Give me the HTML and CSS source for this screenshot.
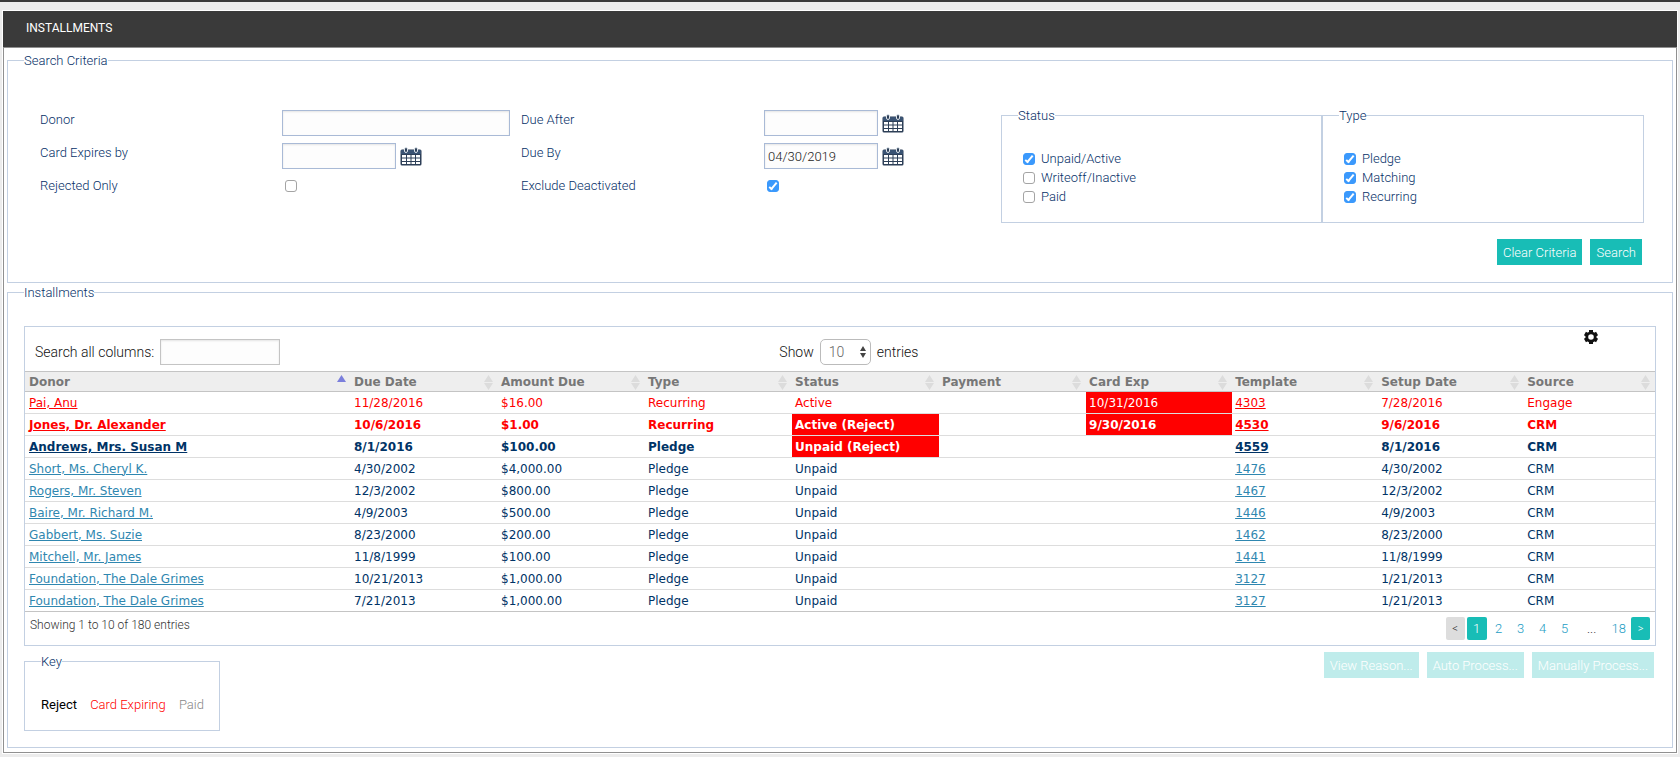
FILE: index.html
```html
<!DOCTYPE html>
<html lang="en">
<head>
<meta charset="utf-8">
<title>Installments</title>
<link rel="stylesheet" href="styles.css">
</head>
<body>
<svg class="defs" aria-hidden="true">
  <symbol id="calendar" viewBox="0 0 22 19">
    <rect x="0.5" y="2.5" width="21" height="16" rx="1.5" fill="#2d3f57"/>
    <rect x="1" y="3" width="20" height="4" fill="#3a5373"/>
    <g fill="#fff">
      <path d="M2 8h4v2.400H2zM7 8h3.500v2.400H7zM11.500 8H15v2.400h-3.500zM16 8h4v2.400h-4z"/>
      <path d="M2 11.500h4v2.400H2zM7 11.500h3.500v2.400H7zM11.500 11.500H15v2.400h-3.500zM16 11.500h4v2.400h-4z"/>
      <path d="M2 15h4v2H2zM7 15h3.500v2H7zM11.500 15H15v2h-3.500zM16 15h4v2h-4z"/>
    </g>
    <g fill="#2d3f57" stroke="#dfe5ec" stroke-width="1">
      <rect x="4.500" y="0.500" width="3" height="5" rx="1.500"/>
      <rect x="14.500" y="0.500" width="3" height="5" rx="1.500"/>
    </g>
  </symbol>
  <symbol id="sort" viewBox="0 0 9 15">
    <path d="M4.500 0L9 7H0zM0 8h9l-4.500 7z" fill="#dcdcdc"/>
  </symbol>
  <symbol id="sort-up" viewBox="0 0 9 15">
    <path d="M4.500 0L9 7H0z" fill="#7b7fdc"/>
  </symbol>
</svg>
<main class="panel">
  <h1 class="panel-title">INSTALLMENTS</h1>
  <div class="panel-body">
    <fieldset class="section criteria">
      <legend>Search Criteria</legend>
      <form>
        <div class="criteria-grid">
          <div class="fields">
            <label for="donor">Donor</label>
            <div><input class="text wide" id="donor" type="text"></div>
            <label for="after">Due After</label>
            <div><input class="text date" id="after" type="text"><button class="icon" type="button" aria-label="Pick due after date"><svg class="cal"><use href="#calendar"/></svg></button></div>
            <label for="expires">Card Expires by</label>
            <div><input class="text date" id="expires" type="text"><button class="icon" type="button" aria-label="Pick card expiry date"><svg class="cal"><use href="#calendar"/></svg></button></div>
            <label for="by">Due By</label>
            <div><input class="text date" id="by" type="text" value="04/30/2019"><button class="icon" type="button" aria-label="Pick due by date"><svg class="cal"><use href="#calendar"/></svg></button></div>
            <label for="rejected">Rejected Only</label>
            <div class="tick"><input id="rejected" type="checkbox"></div>
            <label for="deactivated">Exclude Deactivated</label>
            <div class="tick"><input id="deactivated" type="checkbox" checked></div>
          </div>
          <fieldset class="options">
            <legend>Status</legend>
            <label><input type="checkbox" checked>Unpaid/Active</label>
            <label><input type="checkbox">Writeoff/Inactive</label>
            <label><input type="checkbox">Paid</label>
          </fieldset>
          <fieldset class="options">
            <legend>Type</legend>
            <label><input type="checkbox" checked>Pledge</label>
            <label><input type="checkbox" checked>Matching</label>
            <label><input type="checkbox" checked>Recurring</label>
          </fieldset>
        </div>
        <div class="form-actions">
          <button class="btn" type="button">Clear Criteria</button>
          <button class="btn" type="button">Search</button>
        </div>
      </form>
    </fieldset>

    <fieldset class="section results">
      <legend>Installments</legend>
      <div class="grid-box">
        <div class="toolbar">
          <label class="find">Search all columns: <input class="text" type="text"></label>
          <div class="length">
            <label for="length">Show</label>
            <span class="select-wrap"><select id="length"><option>10</option><option>25</option></select><svg class="arrows" viewBox="0 0 6 12"><path d="M3 0l3 5H0zM0 7h6l-3 5z" fill="#444"/></svg></span>
            <span>entries</span>
          </div>
          <button class="icon gear" type="button" aria-label="Settings"><svg viewBox="0 0 16 16" width="16" height="16"><g stroke="#111" stroke-width="4"><path d="M8 1v3M8 12v3"/><path d="M8 1v3M8 12v3" transform="rotate(60 8 8)"/><path d="M8 1v3M8 12v3" transform="rotate(120 8 8)"/><circle cx="8" cy="8" r="4.200" fill="none" stroke-width="2.800"/></g></svg></button>
        </div>
        <table>
          <colgroup><col class="col-donor"><col class="col" span="5"><col class="col-narrow" span="3"><col></colgroup>
          <thead>
            <tr>
              <th><span>Donor<svg><use href="#sort-up"/></svg></span></th>
              <th><span>Due Date<svg><use href="#sort"/></svg></span></th>
              <th><span>Amount Due<svg><use href="#sort"/></svg></span></th>
              <th><span>Type<svg><use href="#sort"/></svg></span></th>
              <th><span>Status<svg><use href="#sort"/></svg></span></th>
              <th><span>Payment<svg><use href="#sort"/></svg></span></th>
              <th><span>Card Exp<svg><use href="#sort"/></svg></span></th>
              <th><span>Template<svg><use href="#sort"/></svg></span></th>
              <th><span>Setup Date<svg><use href="#sort"/></svg></span></th>
              <th><span>Source<svg><use href="#sort"/></svg></span></th>
            </tr>
          </thead>
          <tbody>
            <tr class="expiring"><td><a href="#">Pai, Anu</a></td><td>11/28/2016</td><td>$16.00</td><td>Recurring</td><td>Active</td><td></td><td class="alert">10/31/2016</td><td><a href="#">4303</a></td><td>7/28/2016</td><td>Engage</td></tr>
            <tr class="expiring reject"><td><a href="#">Jones, Dr. Alexander</a></td><td>10/6/2016</td><td>$1.00</td><td>Recurring</td><td class="alert">Active (Reject)</td><td></td><td class="alert">9/30/2016</td><td><a href="#">4530</a></td><td>9/6/2016</td><td>CRM</td></tr>
            <tr class="reject"><td><a href="#">Andrews, Mrs. Susan M</a></td><td>8/1/2016</td><td>$100.00</td><td>Pledge</td><td class="alert">Unpaid (Reject)</td><td></td><td></td><td><a href="#">4559</a></td><td>8/1/2016</td><td>CRM</td></tr>
            <tr><td><a href="#">Short, Ms. Cheryl K.</a></td><td>4/30/2002</td><td>$4,000.00</td><td>Pledge</td><td>Unpaid</td><td></td><td></td><td><a href="#">1476</a></td><td>4/30/2002</td><td>CRM</td></tr>
            <tr><td><a href="#">Rogers, Mr. Steven</a></td><td>12/3/2002</td><td>$800.00</td><td>Pledge</td><td>Unpaid</td><td></td><td></td><td><a href="#">1467</a></td><td>12/3/2002</td><td>CRM</td></tr>
            <tr><td><a href="#">Baire, Mr. Richard M.</a></td><td>4/9/2003</td><td>$500.00</td><td>Pledge</td><td>Unpaid</td><td></td><td></td><td><a href="#">1446</a></td><td>4/9/2003</td><td>CRM</td></tr>
            <tr><td><a href="#">Gabbert, Ms. Suzie</a></td><td>8/23/2000</td><td>$200.00</td><td>Pledge</td><td>Unpaid</td><td></td><td></td><td><a href="#">1462</a></td><td>8/23/2000</td><td>CRM</td></tr>
            <tr><td><a href="#">Mitchell, Mr. James</a></td><td>11/8/1999</td><td>$100.00</td><td>Pledge</td><td>Unpaid</td><td></td><td></td><td><a href="#">1441</a></td><td>11/8/1999</td><td>CRM</td></tr>
            <tr><td><a href="#">Foundation, The Dale Grimes</a></td><td>10/21/2013</td><td>$1,000.00</td><td>Pledge</td><td>Unpaid</td><td></td><td></td><td><a href="#">3127</a></td><td>1/21/2013</td><td>CRM</td></tr>
            <tr><td><a href="#">Foundation, The Dale Grimes</a></td><td>7/21/2013</td><td>$1,000.00</td><td>Pledge</td><td>Unpaid</td><td></td><td></td><td><a href="#">3127</a></td><td>1/21/2013</td><td>CRM</td></tr>
          </tbody>
        </table>
        <div class="grid-footer">
          <span class="info">Showing 1 to 10 of 180 entries</span>
          <nav class="pages" aria-label="Pages">
            <button class="step" type="button" disabled>&lt;</button>
            <a class="current" href="#">1</a>
            <a href="#">2</a>
            <a href="#">3</a>
            <a href="#">4</a>
            <a href="#">5</a>
            <span class="dots">...</span>
            <a href="#">18</a>
            <button class="step next" type="button">&gt;</button>
          </nav>
        </div>
      </div>
      <div class="bottom">
        <fieldset class="key">
          <legend>Key</legend>
          <span class="key-reject">Reject</span>
          <span class="key-expiring">Card Expiring</span>
          <span class="key-paid">Paid</span>
        </fieldset>
        <div class="actions">
          <button class="btn" type="button" disabled>View Reason...</button>
          <button class="btn" type="button" disabled>Auto Process...</button>
          <button class="btn" type="button" disabled>Manually Process...</button>
        </div>
      </div>
    </fieldset>
  </div>
</main>
</body>
</html>
```
FILE: styles.css
```css
* {
  box-sizing: border-box;
}

body {
  margin: 0;
  padding: 8px 2px 3px;
  border-top: 2px solid #3a3a3a;
  background: #ececec;
  color: #063068;
  font: 300 13px/17px Roboto, sans-serif;
}

button,
input,
select {
  font: inherit;
}

.defs {
  position: absolute;
  width: 0;
  height: 0;
}

.panel {
  padding: 1px;
  background: #fff;
}

.panel-title {
  margin: 0;
  padding: 9px 23px 10px;
  background: #3a3a3a;
  color: #fff;
  font-size: 12px;
  font-weight: 400;
  line-height: 17px;
}

.panel-body {
  padding: 4px 3px;
  border: 1px solid #909090;
}

fieldset {
  min-width: 0;
  margin: 0;
  border: 1px solid #c3d0e2;
}

legend {
  padding: 0;
}

.section {
  padding: 0 16px;
}

.criteria {
  padding: 41px 28px 17px 16px;
}

.criteria form {
  padding-left: 16px;
}

.criteria-grid {
  display: grid;
  grid-template-columns: 961fr 321fr 322fr;
  align-items: start;
}

.fields {
  display: grid;
  grid-template-columns: 242fr 239fr 243fr 237fr;
  grid-auto-rows: 33px;
}

.fields > label {
  padding-top: 1px;
}

.fields > div {
  display: flex;
  align-items: flex-start;
}

.fields > .tick {
  padding: 4px 3px 0;
}

.text {
  height: 26px;
  padding: 0 3px;
  border: 1px solid #a9bad6;
  border-radius: 0;
  background: #fdfdfd;
  box-shadow: inset 0 1px 2px #e4e4e4;
  color: #222;
}

.wide {
  width: 228px;
}

.date {
  width: 114px;
}

.icon {
  display: flex;
  padding: 0;
  border: 0;
  background: none;
}

.fields .icon {
  margin: 4px 0 0 4px;
}

.cal {
  width: 22px;
  height: 19px;
}

input[type="checkbox"] {
  display: flex;
  width: 12px;
  height: 12px;
  margin: 0;
  border: 1px solid #a4a4a4;
  border-radius: 3px;
  background: #fff;
  appearance: none;
}

input[type="checkbox"]:checked {
  border-color: #3b99fc;
  background: #3b99fc;
}

input[type="checkbox"]:checked::after {
  width: 4px;
  height: 7px;
  margin: 0 3px;
  border: solid #fff;
  border-width: 0 2px 2px 0;
  content: "";
  transform: rotate(40deg);
}

.options {
  margin-top: -3px;
  padding: 25px 21px 16px;
}

.options legend {
  margin-left: -5px;
}

.options label {
  display: flex;
  align-items: center;
  gap: 6px;
  height: 19px;
}

.form-actions {
  display: flex;
  justify-content: flex-end;
  gap: 8px;
  padding: 16px 2px 0;
}

.btn {
  height: 26px;
  padding: 0 6px;
  border: 0;
  background: #18bdb6;
  color: #fff;
}

.btn:disabled {
  opacity: 0.27;
}

.results {
  margin-top: 1px;
  padding-bottom: 16px;
}

.grid-box {
  margin-top: 25px;
  border: 1px solid #c3d0e2;
}

.toolbar {
  display: grid;
  grid-template-columns: 755fr auto 737fr;
  align-items: center;
  padding: 2px 10px 6px;
  color: #111;
  font-size: 14px;
}

.find,
.length {
  display: flex;
  align-items: center;
  gap: 6px;
  padding-top: 10px;
}

.find .text {
  width: 120px;
  border-color: #c4c4c4;
}

.select-wrap {
  position: relative;
}

select {
  display: block;
  width: 51px;
  height: 26px;
  padding: 0 8px;
  border: 1px solid #bbb;
  border-radius: 5px;
  background: #fff;
  color: #666;
  appearance: none;
}

.arrows {
  position: absolute;
  top: 7px;
  right: 5px;
  width: 6px;
  height: 12px;
  pointer-events: none;
}

.gear {
  align-self: start;
  justify-self: end;
  margin-right: 46px;
}

table {
  width: 100%;
  border-collapse: collapse;
  table-layout: fixed;
  color: #036;
  font: 12px/15px "DejaVu Sans", sans-serif;
}

.col-donor {
  width: 20%;
}

.col {
  width: 9.02%;
}

.col-narrow {
  width: 8.96%;
}

th,
td {
  height: 22px;
  padding: 1px 3px 0;
  border-bottom: 1px solid #ddd;
  background-clip: padding-box;
  text-align: left;
}

th:first-child,
td:first-child {
  padding-left: 4px;
}

thead {
  border-top: 1px solid #c4c4c4;
}

th {
  height: 20px;
  padding-right: 5px;
  border-bottom-color: #c4c4c4;
  background: #eee;
  color: #777;
}

th span {
  display: flex;
  align-items: center;
  justify-content: space-between;
}

th svg {
  width: 9px;
  height: 15px;
}

tbody tr:last-child td {
  border-bottom-color: #c4c4c4;
}

td a {
  color: #2f87b0;
}

.reject {
  font-weight: 700;
}

.reject a {
  color: #036;
}

.expiring,
.expiring a {
  color: #f00;
}

.alert {
  background-color: #f00;
  color: #fff;
}

.grid-footer {
  display: flex;
  justify-content: space-between;
  padding: 5px;
}

.info {
  color: #333;
  font-size: 12px;
}

.pages {
  display: flex;
  height: 23px;
  gap: 2px;
  line-height: 23px;
}

.pages a {
  min-width: 20px;
  padding: 0 3px;
  border-radius: 2px;
  color: #1c9cc4;
  text-align: center;
  text-decoration: none;
}

.pages .current,
.pages .next {
  background: #18bdb6;
  color: #fff;
}

.step {
  width: 19px;
  padding: 0;
  border: 0;
  border-radius: 2px;
  font-size: 11px;
}

.step:disabled {
  background: #ddd;
  color: #333;
}

.dots {
  width: 30px;
  color: #333;
  text-align: center;
}

.bottom {
  display: flex;
  align-items: flex-start;
  justify-content: space-between;
  padding-top: 6px;
}

.key {
  margin-top: 1px;
  padding: 26px 15px 17px 16px;
}

.key-reject {
  color: #000;
  font-weight: 400;
}

.key-expiring {
  margin: 0 10px;
  color: #f00;
}

.key-paid {
  color: #888;
}

.actions {
  display: flex;
  gap: 8px;
  padding-right: 2px;
}
```
